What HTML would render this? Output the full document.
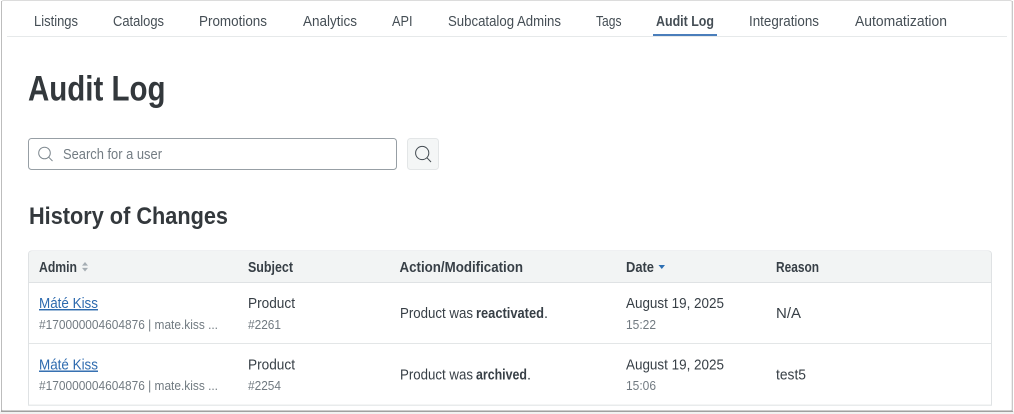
<!DOCTYPE html>
<html lang="en">
<head>
<meta charset="utf-8">
<title>Audit Log</title>
<style>
html,body{margin:0;padding:0;width:1014px;height:414px;overflow:hidden;background:#fff}
svg{display:block;filter:blur(.3px)}
text{font-family:"Liberation Sans",sans-serif;fill:#373f46;font-size:14.5px}
.nav{font-size:14.5px;fill:#454e55}
.b{font-weight:700}
.g{font-size:13px;fill:#717a81}
.h{font-weight:700;fill:#33383c}
</style>
</head>
<body>
<svg width="1014" height="414" viewBox="0 0 1014 414" xmlns="http://www.w3.org/2000/svg">
<rect width="1014" height="414" fill="#fff"/>
<!-- window frame -->
<rect x="0" y="411" width="1014" height="3" fill="#f2f2f2"/>
<rect x="1.5" y="0.5" width="1010.5" height="410.5" rx="2" fill="#fff" stroke="#dcdcdc"/>
<rect x="1" y="1" width="1" height="410" fill="#bdbdbd"/>
<rect x="1" y="410.6" width="1012" height="1.2" fill="#8c8c8c"/>
<rect x="1012" y="1" width="1" height="410" fill="#c8c8c8"/>

<!-- nav -->
<rect x="7" y="36" width="1000" height="1" fill="#e6e9ea"/>
<text class="nav" x="34" y="26" textLength="44" lengthAdjust="spacingAndGlyphs">Listings</text>
<text class="nav" x="113" y="26" textLength="51" lengthAdjust="spacingAndGlyphs">Catalogs</text>
<text class="nav" x="199" y="26" textLength="68" lengthAdjust="spacingAndGlyphs">Promotions</text>
<text class="nav" x="303" y="26" textLength="54" lengthAdjust="spacingAndGlyphs">Analytics</text>
<text class="nav" x="392" y="26" textLength="20.5" lengthAdjust="spacingAndGlyphs">API</text>
<text class="nav" x="448" y="26" textLength="113" lengthAdjust="spacingAndGlyphs">Subcatalog Admins</text>
<text class="nav" x="596" y="26" textLength="25.5" lengthAdjust="spacingAndGlyphs">Tags</text>
<text class="nav b" x="656" y="26" textLength="58" lengthAdjust="spacingAndGlyphs">Audit Log</text>
<text class="nav" x="749" y="26" textLength="70" lengthAdjust="spacingAndGlyphs">Integrations</text>
<text class="nav" x="855" y="26" textLength="92" lengthAdjust="spacingAndGlyphs">Automatization</text>
<rect x="653" y="34" width="64" height="2" fill="#4a7ebb"/>

<!-- headings -->
<text class="h" x="28" y="100.5" style="font-size:35px" textLength="137.5" lengthAdjust="spacingAndGlyphs">Audit Log</text>
<text class="h" x="29" y="224" style="font-size:24.5px" textLength="199" lengthAdjust="spacingAndGlyphs">History of Changes</text>

<!-- search -->
<rect x="28.5" y="138.5" width="368" height="31" rx="3" fill="#fff" stroke="#979fa5"/>
<g fill="none" stroke="#7d878e" stroke-width="1">
<circle cx="44.5" cy="153" r="5.8"/>
<path d="M48.8 157.3L52.5 161"/>
</g>
<text x="63" y="159" style="font-size:14.5px;fill:#737c83" textLength="99" lengthAdjust="spacingAndGlyphs">Search for a user</text>
<rect x="407.5" y="138.5" width="31" height="31" rx="3" fill="#f4f6f6" stroke="#e3e6e7"/>
<g fill="none" stroke="#434b51" stroke-width="1">
<circle cx="422.2" cy="153" r="6.6"/>
<path d="M427 157.8L431 162"/>
</g>

<!-- table -->
<path d="M28.5 405V254a3 3 0 0 1 3-3H988.5a3 3 0 0 1 3 3V405" fill="#fff" stroke="#dfe2e4"/>
<path d="M29 282V254a3 3 0 0 1 3-3H988a3 3 0 0 1 3 3V282Z" fill="#f2f4f4"/>
<rect x="29" y="282" width="962" height="1" fill="#dfe2e4"/>
<rect x="29" y="343" width="962" height="1" fill="#e3e6e7"/>
<rect x="28" y="404.6" width="964" height="1.2" fill="#e3e6e7"/>

<text class="b" x="39" y="272" style="font-size:14.5px" textLength="38" lengthAdjust="spacingAndGlyphs">Admin</text>
<path d="M85 262l3 3.6h-6zM85 271.5l-3-3.6h6z" fill="#a5adb3"/>
<text class="b" x="248" y="272" style="font-size:14.5px" textLength="45" lengthAdjust="spacingAndGlyphs">Subject</text>
<text class="b" x="399.5" y="272" style="font-size:14.5px" textLength="123.5" lengthAdjust="spacingAndGlyphs">Action/Modification</text>
<text class="b" x="626" y="272" style="font-size:14.5px" textLength="28" lengthAdjust="spacingAndGlyphs">Date</text>
<path d="M658.5 265h6.5l-3.2 4z" fill="#2d6fb3"/>
<text class="b" x="776" y="272" style="font-size:14.5px" textLength="43" lengthAdjust="spacingAndGlyphs">Reason</text>

<!-- row 1 -->
<text x="39" y="308" style="fill:#2d6aae;text-decoration:underline" textLength="59" lengthAdjust="spacingAndGlyphs">Máté Kiss</text>
<text class="g" x="39" y="329" textLength="179" lengthAdjust="spacingAndGlyphs">#170000004604876 | mate.kiss ...</text>
<text x="248" y="308" textLength="47" lengthAdjust="spacingAndGlyphs">Product</text>
<text class="g" x="248" y="329" textLength="33" lengthAdjust="spacingAndGlyphs">#2261</text>
<text x="400" y="318" textLength="73" lengthAdjust="spacingAndGlyphs">Product was</text>
<text class="b" x="476" y="318" textLength="68" lengthAdjust="spacingAndGlyphs">reactivated</text>
<text x="544" y="318">.</text>
<text x="626" y="308" textLength="98" lengthAdjust="spacingAndGlyphs">August 19, 2025</text>
<text class="g" x="626" y="329" textLength="30" lengthAdjust="spacingAndGlyphs">15:22</text>
<text x="776" y="318" textLength="25" lengthAdjust="spacingAndGlyphs">N/A</text>

<!-- row 2 -->
<text x="39" y="369.5" style="fill:#2d6aae;text-decoration:underline" textLength="59" lengthAdjust="spacingAndGlyphs">Máté Kiss</text>
<text class="g" x="39" y="390" textLength="179" lengthAdjust="spacingAndGlyphs">#170000004604876 | mate.kiss ...</text>
<text x="248" y="369.5" textLength="47" lengthAdjust="spacingAndGlyphs">Product</text>
<text class="g" x="248" y="390" textLength="33" lengthAdjust="spacingAndGlyphs">#2254</text>
<text x="400" y="379.5" textLength="73" lengthAdjust="spacingAndGlyphs">Product was</text>
<text class="b" x="476" y="379.5" textLength="51" lengthAdjust="spacingAndGlyphs">archived</text>
<text x="527" y="379.5">.</text>
<text x="626" y="369.5" textLength="98" lengthAdjust="spacingAndGlyphs">August 19, 2025</text>
<text class="g" x="626" y="390" textLength="30" lengthAdjust="spacingAndGlyphs">15:06</text>
<text x="776" y="379.5" textLength="30" lengthAdjust="spacingAndGlyphs">test5</text>
</svg>
</body>
</html>
